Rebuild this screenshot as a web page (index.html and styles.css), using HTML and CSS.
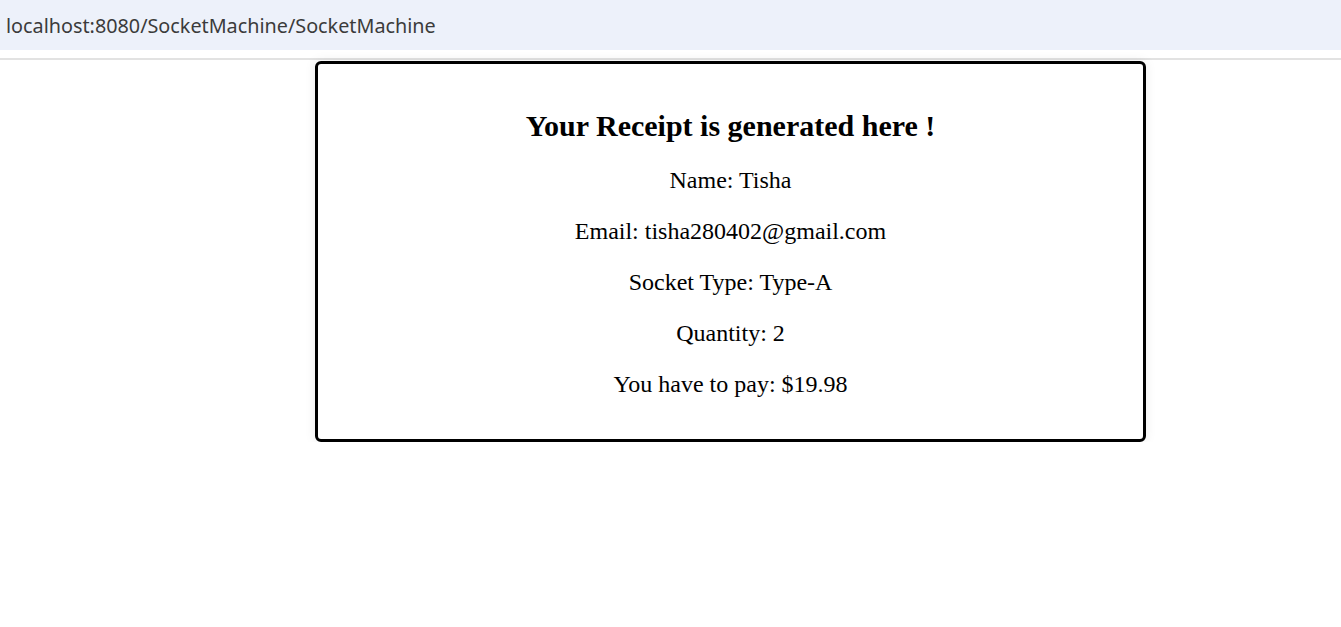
FILE: index.html
```html
<!DOCTYPE html>
<html>
<head>
<meta charset="utf-8">
<link rel="stylesheet" href="styles.css">
</head>
<body>
<div class="addressbar"><span class="url">localhost:8080/SocketMachine/SocketMachine</span></div>
<div class="divider"></div>
<main class="page">
  <div class="receipt">
    <h2 class="title">Your Receipt is generated here !</h2>
    <p class="line">Name: Tisha</p>
    <p class="line">Email: tisha280402@gmail.com</p>
    <p class="line">Socket Type: Type-A</p>
    <p class="line">Quantity: 2</p>
    <p class="line">You have to pay: $19.98</p>
  </div>
</main>
</body>
</html>
```
FILE: styles.css
```css
html, body {
  margin: 0;
  padding: 0;
  background: #ffffff;
}
.addressbar {
  height: 50px;
  background: #edf1fa;
  display: flex;
  align-items: center;
  padding-left: 6px;
}
.url {
  font-family: "Noto Sans", "Open Sans", sans-serif;
  font-size: 19.8px;
  color: #3b3b3b;
}
.divider {
  margin-top: 8px;
  height: 2px;
  background: #e2e2e2;
}
.page {
  padding-top: 1px;
  font-family: "Liberation Serif", "Times New Roman", serif;
  color: #000;
}
.receipt {
  box-sizing: border-box;
  width: 831px;
  margin-left: 315px;
  border: 3px solid #000;
  border-radius: 6px;
  padding: 15px 20px 17px;
  text-align: center;
  box-shadow: 0 0 12px rgba(0, 0, 0, 0.08);
}
.title {
  font-size: 30px;
  font-weight: bold;
  margin: 30px 0 24px;
}
.line {
  font-size: 24px;
  margin: 24px 0;
}
```
